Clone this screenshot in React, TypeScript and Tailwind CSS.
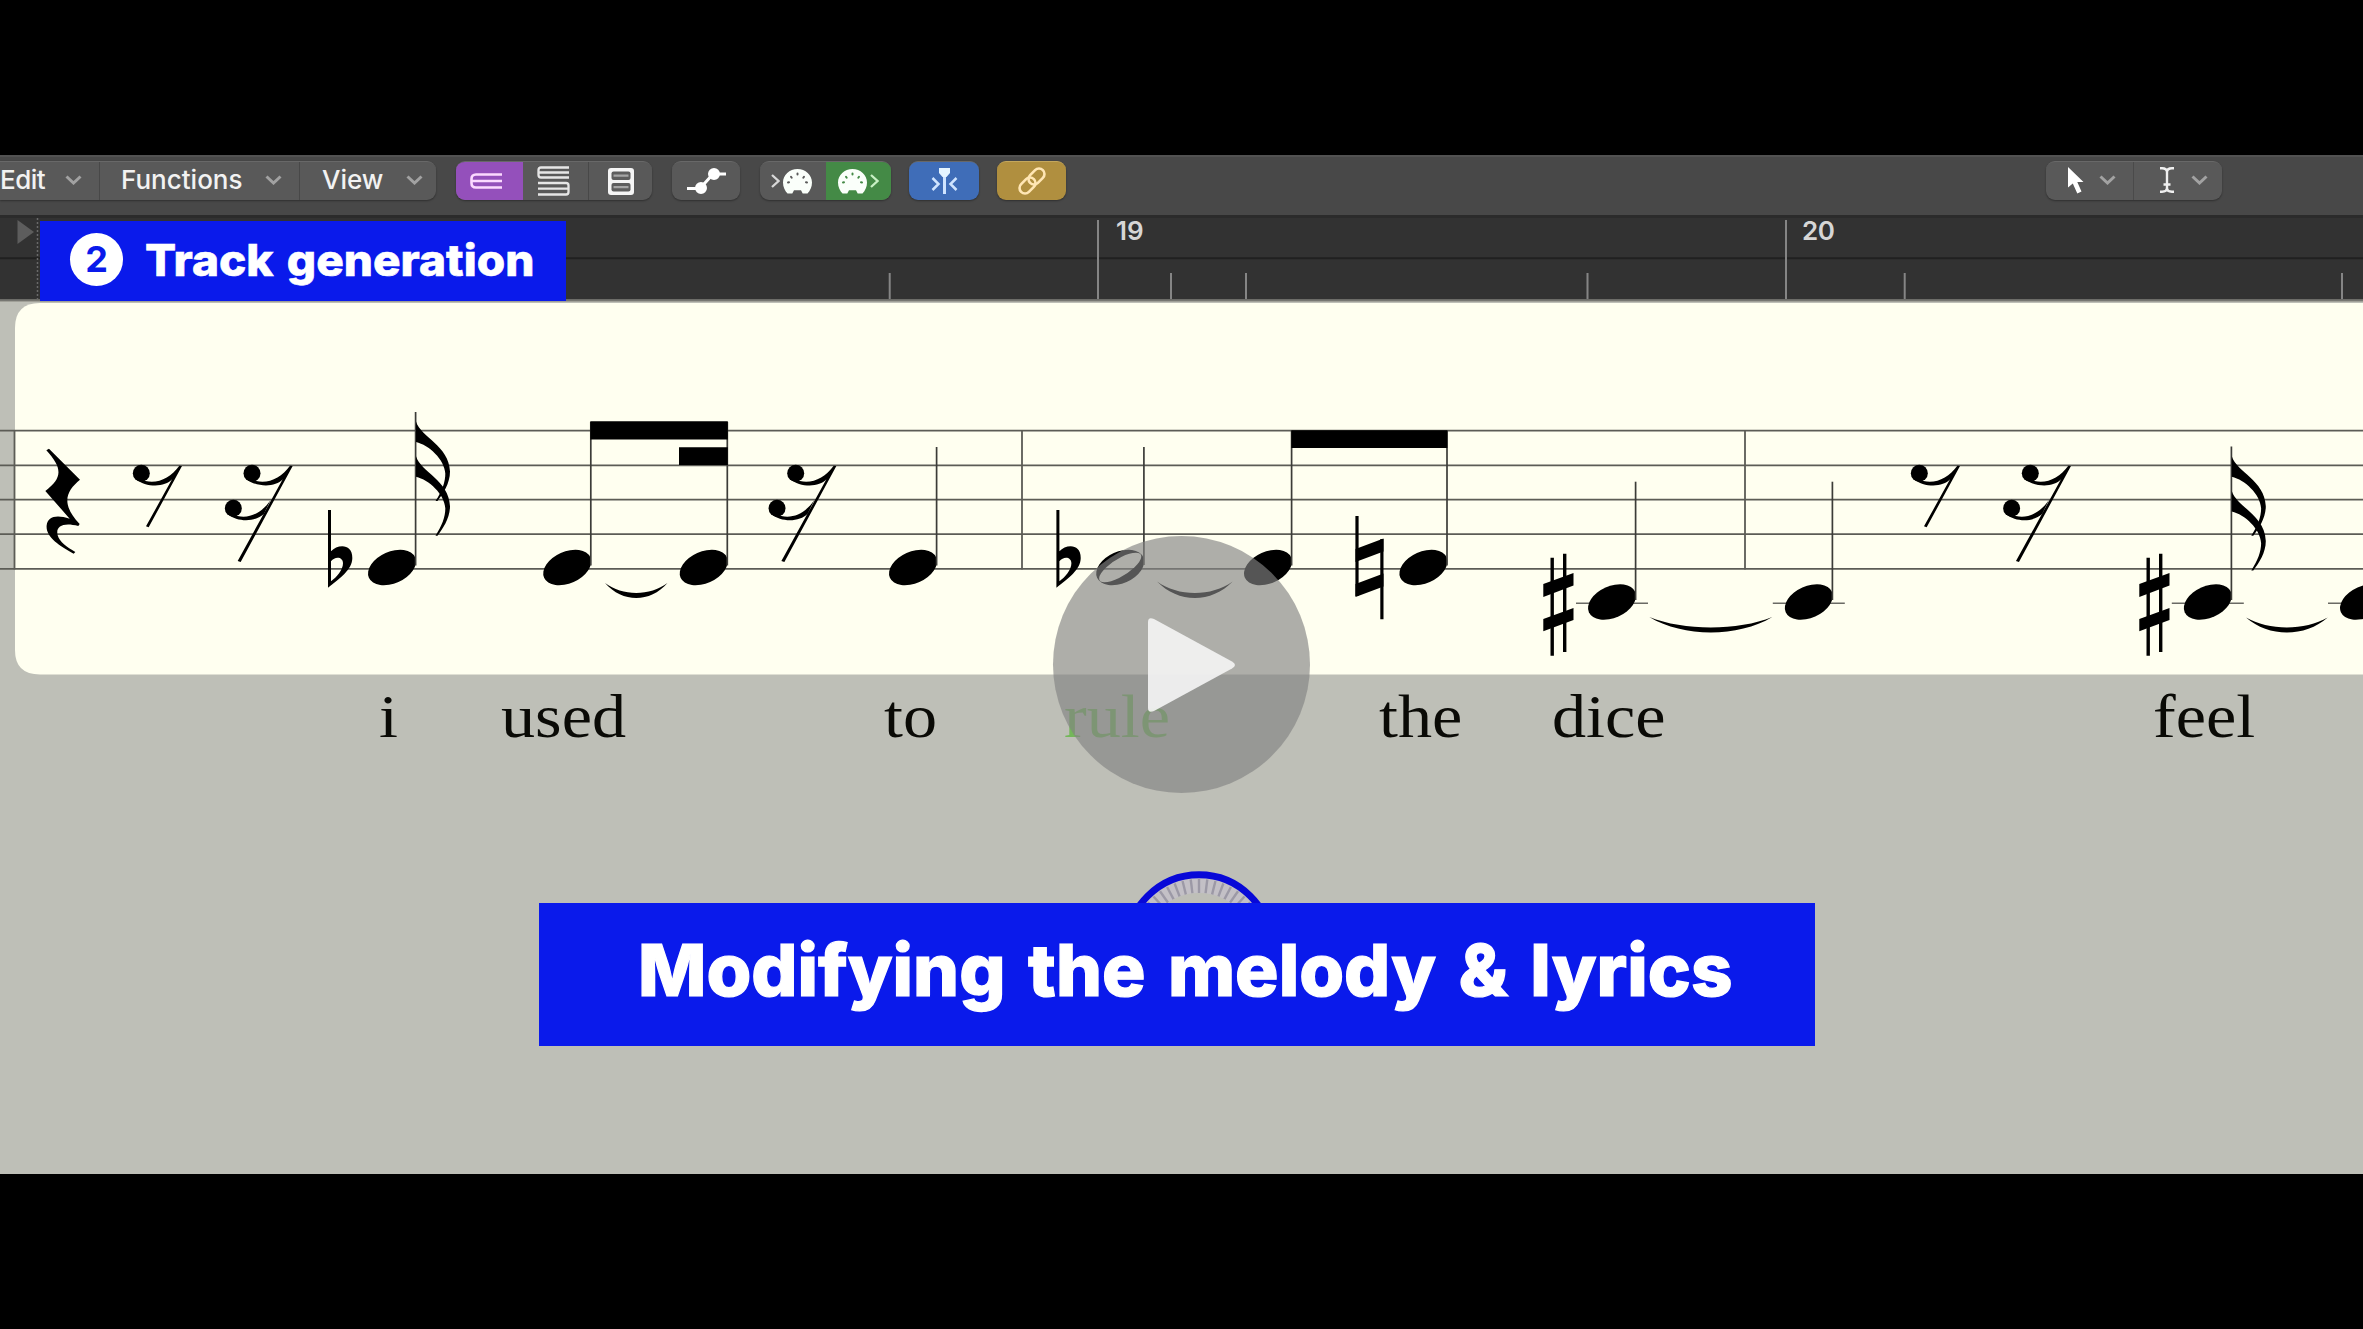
import type { ReactNode } from "react";

const STAFF_LINES = [430.7, 465.3, 499.6, 534.2, 568.8];

function Chevron() {
  return (
    <svg className="h-[10px] w-[17px] shrink-0" viewBox="0 0 17 10" fill="none" stroke="#a2a2a2" strokeWidth="3">
      <path d="M1.5 1.5 8.5 8 15.5 1.5" />
    </svg>
  );
}

function Group({ className, children }: { className: string; children: ReactNode }) {
  return (
    <div
      className={`flex h-[39px] shrink-0 overflow-hidden rounded-[9px] border-t border-[#686868] bg-[#595959] shadow-[0_1px_2px_rgba(0,0,0,0.35)] ${className}`}
    >
      {children}
    </div>
  );
}

function Palette({ holes }: { holes: string }) {
  return (
    <svg className="h-[25px] w-[29px] shrink-0" viewBox="0 0 29 25">
      <path
        d="M14.5 0C6.500 0 0 6 0 13.500 0 18 1.800 21.500 4.500 24.500H9.300L11 21.300H18L19.700 24.500H24.500C27.200 21.500 29 18 29 13.500 29 6 22.500 0 14.500 0Z"
        fill="#fafffa"
      />
      <g stroke={holes} strokeWidth="2" strokeLinecap="round">
        <path d="M5 13.500 6 13.200M8 7.800 8.700 8.800M14.500 4.500V5.500M21 7.800 20.300 8.800M24 13.500 23 13.200" />
      </g>
    </svg>
  );
}

function Toolbar() {
  return (
    <div className="flex h-[60px] shrink-0 items-start border-t-2 border-[#525252] bg-[#484848] pt-1 font-[Inter,sans-serif] text-[26px] leading-none font-medium text-[#f2f2f2]">
      <Group className="w-[436px] rounded-l-none">
        <div className="flex w-[100px] shrink-0 items-center justify-between border-r border-[#484848] pr-[17px] pb-[2px]">
          <span className="tracking-[-0.5px]">Edit</span>
          <Chevron />
        </div>
        <div className="flex w-[200px] shrink-0 items-center justify-between border-r border-[#484848] pr-[17px] pb-[2px] pl-[21px]">
          <span>Functions</span>
          <Chevron />
        </div>
        <div className="flex flex-1 items-center justify-between pr-[13px] pb-[2px] pl-[22px]">
          <span>View</span>
          <Chevron />
        </div>
      </Group>

      <Group className="ml-[20px] w-[196px]">
        <div className="flex w-[67px] items-center justify-center bg-[#9450bb] pr-[6px]">
          <svg className="h-[16px] w-[33px]" viewBox="0 0 33 16" fill="none" stroke="#fbd9ff" strokeWidth="2.600">
            <path d="M32 1.500H6Q1.500 1.500 1.500 6V10Q1.500 14.500 6 14.500H32M2 8H32" />
          </svg>
        </div>
        <div className="flex w-[66px] items-center justify-center border-r border-[#484848] pr-[5px]">
          <svg className="h-[30px] w-[33px]" viewBox="0 0 33 30" fill="none" stroke="#e6e6e6" strokeWidth="2.300">
            <path d="M32 1.500H4Q1.500 1.500 1.500 4V9Q1.500 11.500 4 11.500H32M2 6.500H32" />
            <path d="M1 17H29Q31.500 17 31.500 19.500V26Q31.500 28.500 29 28.500H1M1 22.700H31" />
          </svg>
        </div>
        <div className="flex flex-1 items-center justify-center">
          <svg className="h-[27px] w-[26px]" viewBox="0 0 26 27">
            <rect x="0" y="0" width="26" height="27" rx="3" fill="#f5f5f5" />
            <rect x="3.500" y="3.500" width="19" height="8.500" rx="2" fill="#5d5d5d" />
            <rect x="3.500" y="15" width="19" height="8.500" rx="2" fill="#5d5d5d" />
            <path d="M5.500 7.700H20.500M5.500 19.200H20.500" stroke="#a5a5a5" strokeWidth="2.200" />
          </svg>
        </div>
      </Group>

      <Group className="ml-[20px] w-[68px] items-center justify-center pl-px">
        <svg className="h-[28px] w-[40px]" viewBox="0 0 40 28" stroke="#fff" strokeWidth="3" fill="#fff">
          <path d="M0 21.500H13L26 7H39" fill="none" />
          <circle cx="14" cy="21" r="4.500" />
          <circle cx="27" cy="7" r="4.500" />
        </svg>
      </Group>

      <Group className="ml-[20px] w-[131px]">
        <div className="flex w-[66px] items-center justify-center gap-[3px] pr-[3px]">
          <svg className="h-[14px] w-[9px]" viewBox="0 0 9 14" fill="none" stroke="#d8d8d8" strokeWidth="2.300">
            <path d="M1 1 7.500 7 1 13" />
          </svg>
          <Palette holes="#595959" />
        </div>
        <div className="flex flex-1 items-center justify-center gap-[3px] bg-[#448a46]">
          <Palette holes="#448a46" />
          <svg className="h-[14px] w-[9px]" viewBox="0 0 9 14" fill="none" stroke="#c8f0c4" strokeWidth="2.300">
            <path d="M1 1 7.500 7 1 13" />
          </svg>
        </div>
      </Group>

      <Group className="ml-[18px] w-[70px] items-center justify-center border-[#5a86cc] !bg-[#3f6db8]">
        <svg className="h-[26px] w-[27px]" viewBox="0 0 27 26" fill="none" stroke="#cfe4ff" strokeWidth="2.500">
          <path d="M1.500 10 7.500 16 1.500 22M25.500 10 19.500 16 25.500 22" />
          <path d="M13.500 6V26" strokeWidth="3" />
          <path d="M8 0H19V5L15.500 9H11.500L8 5Z" fill="#e4f4ff" stroke="none" />
        </svg>
      </Group>

      <Group className="ml-[18px] w-[69px] items-center justify-center border-[#c4a75c] !bg-[#b08f3f]">
        <svg className="h-[28px] w-[32px]" viewBox="0 0 32 28" fill="none" stroke="#ffe6b4" strokeWidth="2.600">
          <rect x="-9" y="-5.500" width="18" height="11" rx="5.500" transform="translate(20.500 9.500) rotate(-45)" />
          <rect x="-9" y="-5.500" width="18" height="11" rx="5.500" transform="translate(11.500 18.500) rotate(-45)" />
        </svg>
      </Group>

      <Group className="mr-[141px] ml-auto w-[176px]">
        <div className="flex w-[88px] items-center border-r border-[#4a4a4a] pb-[2px] pl-[22px]">
          <svg className="h-[27px] w-[16px]" viewBox="0 0 16 27" fill="#fff">
            <path d="M0 0V20.500L4.800 16.500 9.300 26.500 13.500 24.600 9.300 15H15.500Z" />
          </svg>
          <span className="ml-[15px] flex">
            <Chevron />
          </span>
        </div>
        <div className="flex flex-1 items-center pb-[2px] pl-[26px]">
          <svg className="h-[26px] w-[14px]" viewBox="0 0 14 26" fill="none" stroke="#f0f0f0" strokeWidth="2.400">
            <path d="M0 1.300H2Q7 1.300 7 5Q7 1.300 12 1.300H14M0 24.700H2Q7 24.700 7 21Q7 24.700 12 24.700H14M7 4V22M3.500 17.500H10.500" />
          </svg>
          <span className="ml-[17px] flex">
            <Chevron />
          </span>
        </div>
      </Group>
    </div>
  );
}

function Ruler() {
  return (
    <div className="grid h-[87px] shrink-0 bg-[#323232]">
      <svg className="col-start-1 row-start-1 h-[87px] w-full" viewBox="0 215 2363 87">
        <rect x="0" y="215" width="2363" height="3" fill="#2b2b2b" />
        <path d="M0 258.300H2363" stroke="#202020" strokeWidth="2" />
        <path d="M17.500 220 34 232 17.500 244Z" fill="#5d5d5d" />
        <path d="M37.500 218V300" stroke="#6a6a6a" strokeWidth="1.500" strokeDasharray="2 2" />
        <path d="M1098 220V300M1786 220V300" stroke="#858585" strokeWidth="2" />
        <path
          d="M889.700 273V300M1171 273V300M1246 273V300M1587.500 273V300M1904.700 273V300M2342 273V300"
          stroke="#858585"
          strokeWidth="2"
        />
        <rect x="0" y="299" width="2363" height="1.500" fill="#6c6c68" />
        <rect x="0" y="300.500" width="2363" height="1.500" fill="#a0a098" />
      </svg>
      <div className="col-start-1 row-start-1 flex pt-[3px] pl-[59px] font-[Inter,sans-serif] text-[26px] leading-[26px] font-semibold text-[#d6d6d6]">
        <span className="w-[1057px] shrink-0">18</span>
        <span className="w-[686px] shrink-0">19</span>
        <span className="tracking-[-0.5px]">20</span>
      </div>
    </div>
  );
}

function Note({ x, y, stemTop }: { x: number; y: number; stemTop?: number }) {
  return (
    <g>
      <ellipse rx="25.300" ry="15.800" transform={`translate(${x} ${y}) rotate(-24)`} fill="#000" />
      {stemTop !== undefined && (
        <path d={`M${x + 23.6} ${stemTop}V${y - 2}`} stroke="#3c3c38" strokeWidth="1.700" />
      )}
    </g>
  );
}

function Ledger({ x }: { x: number }) {
  return <path d={`M${x - 36} 603.300H${x + 36}`} stroke="#6a6a64" strokeWidth="1.600" />;
}

function Flags({ x, y }: { x: number; y: number }) {
  const d =
    "M0 0C5 16 33 24 34 50 34 62 27 72 21.500 79.500H19.500C26 70 29.500 60 29.300 52 28.500 38 13 23.500 0 20.500Z";
  return (
    <g transform={`translate(${x} ${y})`} fill="#000">
      <path d={d} />
      <path d={d} transform="translate(0 34.700)" />
    </g>
  );
}

function Tie({ x1, x2, y, bottom }: { x1: number; x2: number; y: number; bottom: number }) {
  const w = x2 - x1;
  const depth = bottom - y;
  const low = y + depth * 1.333;
  const high = y + (depth - 5) * 1.333;
  return (
    <path
      d={`M${x1} ${y}C${x1 + w * 0.28} ${low} ${x2 - w * 0.28} ${low} ${x2} ${y}C${x2 - w * 0.28} ${high} ${x1 + w * 0.28} ${high} ${x1} ${y}Z`}
      fill="#000"
    />
  );
}

function QuarterRest() {
  return (
    <path
      transform="translate(0 390) scale(0.33333)"
      d="M147 176 240 269C200 302 180 340 239 402L235 408C190 396 166 408 173 436 179 456 200 471 226 486L221 491C178 468 136 440 140 406 143 380 168 373 209 386L136 303C188 262 188 236 139 181Z"
    />
  );
}

function EighthRest({ dx = 0 }: { dx?: number }) {
  return (
    <g transform={`translate(${dx} 390) scale(0.33333)`}>
      <circle cx="424" cy="250" r="25.500" />
      <path d="M405 266C440 294 495 292 516 268L438 409 446 412 546 228 538 227C512 262 475 282 437 273Z" />
    </g>
  );
}

function SixteenthRest({ dx = 0 }: { dx?: number }) {
  return (
    <g transform={`translate(${dx} 390) scale(0.33333)`}>
      <circle cx="756" cy="250" r="25.500" />
      <circle cx="700" cy="355" r="25.500" />
      <path d="M737 266C772 294 827 292 848 268L713 513 722 516 878 228 870 227C844 262 807 282 769 273Z" />
      <path d="M681 371C716 399 768 395 792 371L812 330C788 366 751 387 713 378Z" />
    </g>
  );
}

function Flat({ dx = 0 }: { dx?: number }) {
  return (
    <path
      transform={`translate(${dx} 390) scale(0.33333)`}
      fillRule="evenodd"
      d="M984 360H993V484C1012 463 1057 459 1057 504 1057 538 1020 566 984 593ZM993 514V574C1010 562 1029 540 1029 520 1029 500 1005 498 993 514Z"
    />
  );
}

function Sharp({ dx = 0 }: { dx?: number }) {
  return (
    <g transform={`translate(${dx} 0)`}>
      <path d="M1552.200 557.700V655.700M1564.700 553.700V652" stroke="#000" strokeWidth="3.400" />
      <path d="M1543.300 584 1573.500 573V585.500L1543.300 597ZM1543.300 619 1573.500 608V620L1543.300 631.300Z" />
    </g>
  );
}

function Score() {
  return (
    <div className="h-[373px] shrink-0 bg-[#bebfb7]">
      <svg className="h-[373px] w-full" viewBox="0 302 2363 373">
        <path d="M2363 303H40Q15 303 15 328V650Q15 674.500 40 674.500H2363Z" fill="#fffff0" />
        <g stroke="#5c5c56" strokeWidth="1.800">
          {STAFF_LINES.map((y) => (
            <path key={y} d={`M0 ${y}H2363`} />
          ))}
          <path d="M14.500 430V569.500M1022 430V569.500M1745 430V569.500" />
        </g>

        <QuarterRest />
        <EighthRest />
        <SixteenthRest />
        <Flat />
        <Note x={392} y={567.5} stemTop={412} />
        <Flags x={416} y={421.5} />

        <Note x={567.2} y={567.5} stemTop={422} />
        <Note x={703.7} y={567.5} stemTop={422} />
        <path d="M590.300 421.300H727.800V439.500H590.300ZM679 447.300H727.800V465H679Z" />
        <Tie x1={605} x2={667.5} y={583} bottom={598} />

        <SixteenthRest dx={543.7} />
        <Note x={913} y={567.5} stemTop={447} />

        <Flat dx={728.4} />
        <g transform="translate(1120.200 567.500) rotate(-24)">
          <path
            fillRule="evenodd"
            d="M-25.300 0A25.300 15.800 0 1 0 25.300 0A25.300 15.800 0 1 0 -25.300 0ZM-23.500 1A23.500 8.300 -8 1 0 23.500 -1A23.500 8.300 -8 1 0 -23.500 1Z"
          />
        </g>
        <path d="M1143.900 447V565" stroke="#3c3c38" strokeWidth="1.700" />
        <Tie x1={1157} x2={1232.7} y={581.5} bottom={598} />

        <Note x={1268} y={567.5} stemTop={431} />
        <Note x={1423.4} y={567.5} stemTop={431} />
        <path d="M1291.300 430.300H1447.400V448H1291.300Z" />

        <path d="M1357 516V596M1381.900 539V619.300" stroke="#000" strokeWidth="3.200" />
        <path d="M1355.500 549 1383.500 538.500V551.500L1355.500 562ZM1355.500 584 1383.500 573.500V586.500L1355.500 597Z" />

        <Sharp />
        <Ledger x={1612} />
        <Note x={1612} y={602} stemTop={481.7} />
        <Tie x1={1649.3} x2={1772.3} y={617} bottom={632.5} />
        <Ledger x={1808.8} />
        <Note x={1808.8} y={602} stemTop={481.7} />

        <EighthRest dx={1778} />
        <SixteenthRest dx={1778.3} />
        <Sharp dx={596} />
        <Ledger x={2207.8} />
        <Note x={2207.8} y={602} stemTop={446.5} />
        <Flags x={2231.8} y={456.2} />
        <Tie x1={2246} x2={2327.7} y={617.5} bottom={632.5} />
        <Ledger x={2364} />
        <Note x={2364} y={602} />
      </svg>
    </div>
  );
}

function Word({ className, children }: { className: string; children: string }) {
  return (
    <div className={`shrink-0 ${className}`}>
      <span className="inline-block origin-left scale-x-[1.1]">{children}</span>
    </div>
  );
}

function Lyrics() {
  return (
    <div className="flex h-[80px] shrink-0 pt-[4px] pl-[379px] font-['Liberation_Serif',serif] text-[62px] leading-[74px] whitespace-nowrap text-[#0a0a06]">
      <Word className="w-[122px]">i</Word>
      <Word className="w-[383px]">used</Word>
      <Word className="w-[180px]">to</Word>
      <Word className="w-[315px] text-[#74b75a]">rule</Word>
      <Word className="w-[173px]">the</Word>
      <Word className="w-[601px]">dice</Word>
      <Word className="w-[120px]">feel</Word>
    </div>
  );
}

function Knob() {
  const ticks = Array.from({ length: 21 }, (_, i) => -70 + i * 7);
  return (
    <svg className="absolute top-[-32px] left-[584px] h-[32px] w-[152px]" viewBox="0 0 152 32">
      <circle cx="76" cy="76" r="72.300" fill="#c3c0c6" stroke="#0808d8" strokeWidth="7" />
      {ticks.map((a) => (
        <path key={a} d="M76 8V22" stroke="#9c99a6" strokeWidth="2.400" transform={`rotate(${a} 76 76)`} />
      ))}
      <circle cx="76" cy="76" r="54" fill="#bebfb7" />
    </svg>
  );
}

export default function App() {
  return (
    <main className="relative flex h-[1329px] w-full flex-col overflow-hidden bg-black pt-[155px]">
      <section className="flex h-[1019px] shrink-0 flex-col bg-[#bebfb7]">
        <Toolbar />
        <Ruler />
        <Score />
        <Lyrics />
      </section>

      <div className="absolute top-[221px] left-[40px] flex h-[80px] w-[526px] items-center bg-[#0a1aeb] pl-[30px] font-[Inter,sans-serif] leading-none whitespace-nowrap text-white">
        <span className="-mt-[4px] flex size-[53px] shrink-0 items-center justify-center rounded-full bg-white text-[36px] font-bold text-[#0a1aeb]">
          2
        </span>
        <span className="-mt-[3px] ml-[22px] inline-block origin-left scale-x-[1.045] text-[44px] font-extrabold [word-spacing:3px] [-webkit-text-stroke:0.6px_white]">
          Track generation
        </span>
      </div>

      <div className="absolute top-[903px] left-[539px] flex h-[143px] w-[1276px] items-center bg-[#0a1aeb] pl-[99px] font-[Inter,sans-serif] text-[72px] leading-none font-extrabold whitespace-nowrap text-white">
        <Knob />
        <span className="-mt-[9px] inline-block origin-left scale-x-[1.007] [word-spacing:6.5px] [-webkit-text-stroke:1.2px_white]">
          Modifying the melody &amp; lyrics
        </span>
      </div>

      <button
        aria-label="Play"
        className="absolute top-[536px] left-[1053px] flex size-[257px] items-center justify-center rounded-full bg-[#828282]/65"
      >
        <svg className="ml-[21px] h-[94px] w-[88px]" viewBox="0 0 88 94">
          <path
            d="M0 4Q0 -1.500 6 1L84 43.500Q90 47 84 50.500L6 93Q0 95.500 0 90Z"
            fill="#f3f3f3"
            fillOpacity="0.920"
          />
        </svg>
      </button>
    </main>
  );
}
